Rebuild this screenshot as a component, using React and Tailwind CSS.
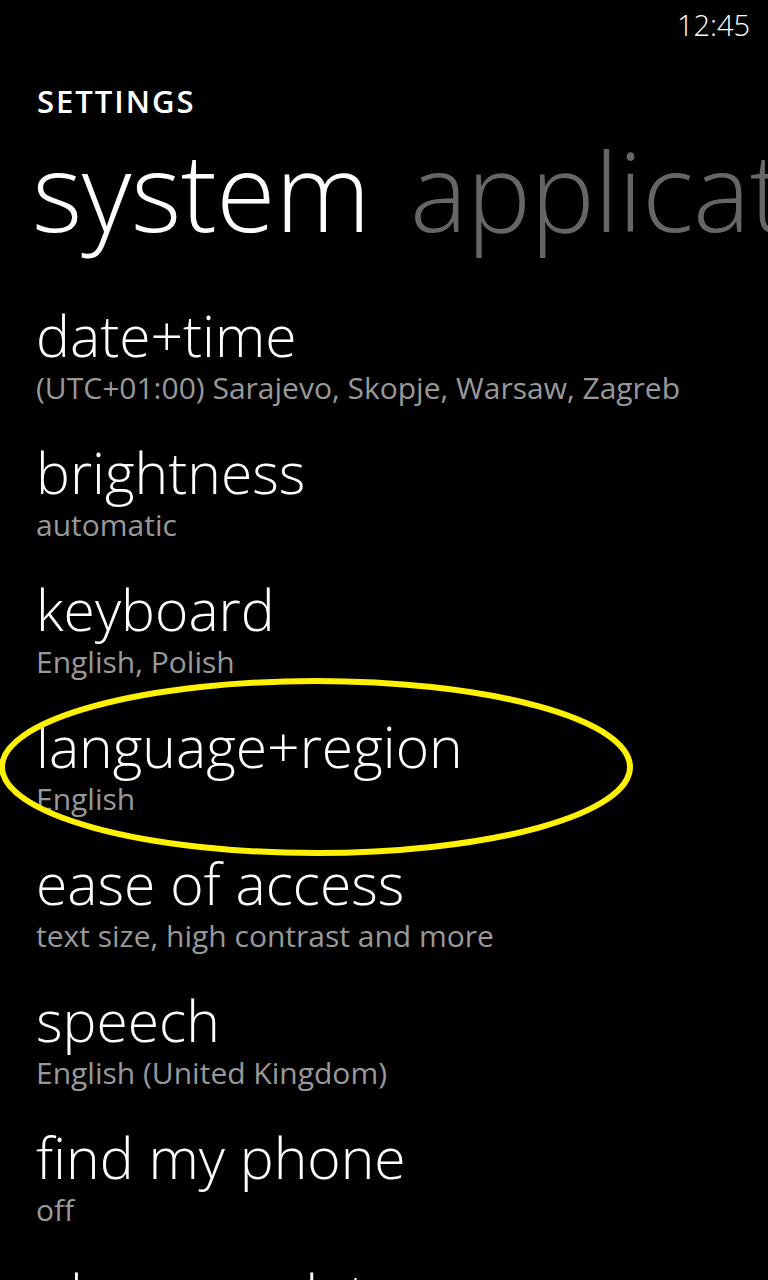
import React from "react";

const items = [
  { title: "date+time", sub: "(UTC+01:00) Sarajevo, Skopje, Warsaw, Zagreb" },
  { title: "brightness", sub: "automatic" },
  { title: "keyboard", sub: "English, Polish" },
  { title: "language+region", sub: "English" },
  { title: "ease of access", sub: "text size, high contrast and more" },
  { title: "speech", sub: "English (United Kingdom)" },
  { title: "find my phone", sub: "off" },
  { title: "phone update", sub: "" },
];

export default function App() {
  return (
    <div className="relative h-[1280px] w-[768px] overflow-hidden bg-black text-white font-['Open_Sans',sans-serif]">
      {/* status bar */}
      <div className="flex h-[48px] items-center justify-end pr-[18px]">
        <span className="text-[29px] font-light leading-none">12:45</span>
      </div>

      {/* page title */}
      <div className="mt-[38px] pl-[37px] text-[31px] font-semibold leading-none tracking-[2px]">
        SETTINGS
      </div>

      {/* pivot headers */}
      <div className="mt-[20px] flex gap-[40px] whitespace-nowrap pl-[32px] text-[108px] font-light leading-none tracking-[-0.5px]">
        <span>system</span>
        <span className="text-[#666666]">applications</span>
      </div>

      {/* settings list */}
      <div className="mt-[59px] flex flex-col pl-[36px]">
        {items.map((it) => (
          <div key={it.title} className="flex h-[137px] flex-col">
            <div className="text-[57px] font-light leading-[62px]">{it.title}</div>
            <div className="text-[30px] leading-[44px] text-[#999999]">{it.sub}</div>
          </div>
        ))}
      </div>

      {/* highlight annotation */}
      <svg className="absolute left-0 top-[676px]" width="640" height="184" viewBox="0 0 640 184">
        <ellipse cx="316" cy="91" rx="314" ry="86" fill="none" stroke="#fff200" strokeWidth="6" />
      </svg>
    </div>
  );
}
